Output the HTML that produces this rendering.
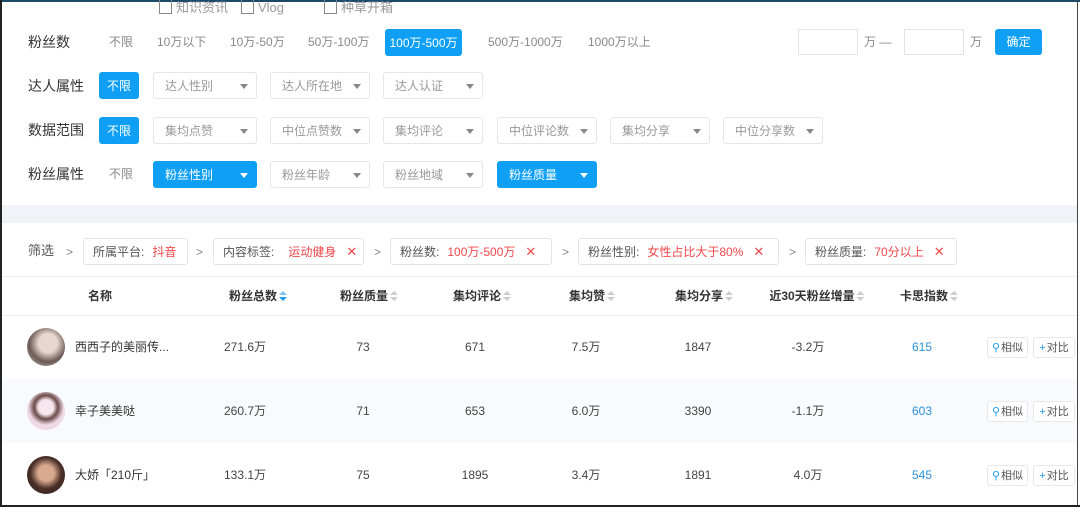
<!DOCTYPE html>
<html><head><meta charset="utf-8"><style>
*{margin:0;padding:0;box-sizing:border-box}
body{width:1080px;height:507px;position:relative;overflow:hidden;background:#fff;font-family:"Liberation Sans","Noto Sans CJK SC",sans-serif;color:#333;line-height:16px}
.a{position:absolute;white-space:nowrap;line-height:16px}
.lbl{font-size:14px;color:#333;line-height:18px}
.opt{font-size:12px;color:#888}
.btn{position:absolute;background:#0fa0f5;color:#fff;border-radius:3px;font-size:12px;display:flex;align-items:center;justify-content:center;line-height:16px}
.dd{position:absolute;border:1px solid #e6e6e6;border-radius:3px;font-size:12px;color:#999;padding-left:11px;display:flex;align-items:center;height:27px}
.dd:after{content:"";position:absolute;right:8px;top:11px;border-left:4px solid transparent;border-right:4px solid transparent;border-top:5px solid #888}
.dd.on{background:#0fa0f5;color:#fff;border-color:#0fa0f5}
.dd.on:after{border-top-color:#fff}
.cb{position:absolute;top:0;width:13px;height:14px;border:1px solid #888;border-top:none}
.bc{position:absolute;top:238px;height:27px;border:1px solid #e4e4e4;border-radius:3px;font-size:12px;color:#555;display:flex;align-items:center;padding-left:9px;line-height:16px}
.bc b{font-weight:normal;color:#f0484a;margin-left:8px}
.bc i{font-style:normal;color:#f0484a;margin-left:10px;font-size:13px}
.gt{position:absolute;top:244px;font-size:12px;color:#888;line-height:16px}
.th{position:absolute;top:288px;font-size:12px;font-weight:bold;color:#333;transform:translateX(-50%);display:flex;align-items:center;line-height:16px}
.srt{display:inline-block;margin-left:2px;width:8px;height:10px;position:relative}
.srt:before,.srt:after{content:"";position:absolute;left:0;border-left:4px solid transparent;border-right:4px solid transparent}
.srt:before{top:0;border-bottom:4px solid #ccc}
.srt:after{bottom:0;border-top:4px solid #ccc}
.srt.b:after{border-top-color:#1e9be8}.srt.b:before{border-bottom-color:#7cc4ef}
.td{position:absolute;font-size:12px;color:#444;transform:translateX(-50%);height:16px;display:flex;align-items:center}
.av{position:absolute;left:27px;width:38px;height:38px;border-radius:50%}
.nm{position:absolute;left:75px;font-size:12px;color:#333;height:16px;display:flex;align-items:center}
.sb{position:absolute;height:21px;border:1px solid #e8e8e8;border-radius:3px;font-size:11px;color:#555;display:flex;align-items:center;justify-content:center;background:#fff}
.sb span{color:#1e9be8;margin-right:1px}
</style></head><body>
<div class="a" style="left:0;top:0;width:1080px;height:2px;background:#1b4a6b"></div>
<div class="a" style="left:0;top:0;width:2px;height:507px;background:#222"></div>
<div class="a" style="right:2px;top:0;width:1px;height:507px;background:#444"></div>
<div class="a" style="left:0;bottom:0;width:1080px;height:2px;background:#222"></div>

<div class="cb" style="left:159px"></div><div class="a opt" style="left:176px;top:0;font-size:13px;color:#999">知识资讯</div>
<div class="cb" style="left:241px"></div><div class="a opt" style="left:258px;top:0;font-size:13px;color:#999">Vlog</div>
<div class="cb" style="left:324px"></div><div class="a opt" style="left:341px;top:0;font-size:13px;color:#999">种草开箱</div>

<div class="a lbl" style="left:28px;top:33px">粉丝数</div>
<div class="a opt" style="left:109px;top:34px">不限</div>
<div class="a opt" style="left:157px;top:34px">10万以下</div>
<div class="a opt" style="left:230px;top:34px">10万-50万</div>
<div class="a opt" style="left:308px;top:34px">50万-100万</div>
<div class="btn" style="left:385px;top:29px;width:77px;height:27px">100万-500万</div>
<div class="a opt" style="left:488px;top:34px">500万-1000万</div>
<div class="a opt" style="left:588px;top:34px">1000万以上</div>
<div class="a" style="left:798px;top:29px;width:60px;height:26px;border:1px solid #e3e3e3"></div>
<div class="a opt" style="left:864px;top:34px">万 —</div>
<div class="a" style="left:904px;top:29px;width:60px;height:26px;border:1px solid #e3e3e3"></div>
<div class="a opt" style="left:970px;top:34px">万</div>
<div class="btn" style="left:995px;top:29px;width:47px;height:26px">确定</div>

<div class="a lbl" style="left:28px;top:77px">达人属性</div>
<div class="btn" style="left:99px;top:72px;width:40px;height:27px">不限</div>
<div class="dd" style="left:153px;top:72px;width:104px">达人性别</div>
<div class="dd" style="left:270px;top:72px;width:100px">达人所在地</div>
<div class="dd" style="left:383px;top:72px;width:100px">达人认证</div>

<div class="a lbl" style="left:28px;top:121px">数据范围</div>
<div class="btn" style="left:99px;top:117px;width:40px;height:27px">不限</div>
<div class="dd" style="left:153px;top:117px;width:104px">集均点赞</div>
<div class="dd" style="left:270px;top:117px;width:100px">中位点赞数</div>
<div class="dd" style="left:383px;top:117px;width:100px">集均评论</div>
<div class="dd" style="left:497px;top:117px;width:100px">中位评论数</div>
<div class="dd" style="left:610px;top:117px;width:100px">集均分享</div>
<div class="dd" style="left:723px;top:117px;width:100px">中位分享数</div>

<div class="a lbl" style="left:28px;top:165px">粉丝属性</div>
<div class="a opt" style="left:109px;top:166px">不限</div>
<div class="dd on" style="left:153px;top:161px;width:104px">粉丝性别</div>
<div class="dd" style="left:270px;top:161px;width:100px">粉丝年龄</div>
<div class="dd" style="left:383px;top:161px;width:100px">粉丝地域</div>
<div class="dd on" style="left:497px;top:161px;width:100px">粉丝质量</div>

<div class="a" style="left:2px;top:205px;width:1075px;height:18px;background:#f0f3f8"></div>

<div class="a" style="left:28px;top:243px;font-size:13px;color:#555">筛选</div>
<div class="gt" style="left:66px">&gt;</div>
<div class="bc" style="left:83px;width:105px">所属平台:<b>抖音</b></div>
<div class="gt" style="left:196px">&gt;</div>
<div class="bc" style="left:213px;width:151px">内容标签:<b style="margin-left:14px">运动健身</b><i>✕</i></div>
<div class="gt" style="left:374px">&gt;</div>
<div class="bc" style="left:390px;width:162px">粉丝数:<b>100万-500万</b><i>✕</i></div>
<div class="gt" style="left:562px">&gt;</div>
<div class="bc" style="left:578px;width:201px">粉丝性别:<b>女性占比大于80%</b><i>✕</i></div>
<div class="gt" style="left:789px">&gt;</div>
<div class="bc" style="left:805px;width:152px">粉丝质量:<b>70分以上</b><i>✕</i></div>

<div class="a" style="left:2px;top:276px;width:1075px;height:1px;background:#f0f0f0"></div>
<div class="th" style="left:100px">名称</div>
<div class="th" style="left:258px">粉丝总数<span class="srt b"></span></div>
<div class="th" style="left:369px">粉丝质量<span class="srt"></span></div>
<div class="th" style="left:482px">集均评论<span class="srt"></span></div>
<div class="th" style="left:592px">集均赞<span class="srt"></span></div>
<div class="th" style="left:704px">集均分享<span class="srt"></span></div>
<div class="th" style="left:817px">近30天粉丝增量<span class="srt"></span></div>
<div class="th" style="left:929px">卡思指数<span class="srt"></span></div>
<div class="a" style="left:2px;top:315px;width:1075px;height:1px;background:#eee"></div>
<div class="a" style="left:2px;top:379px;width:1075px;height:64px;background:#f8fafd"></div>

<div class="av" style="top:328px;background:radial-gradient(circle at 55% 40%,#e8d6d0 0 30%,#6b5a55 60%,#cfc7c5)"></div>
<div class="nm" style="top:339px">西西子的美丽传...</div>
<div class="td" style="left:245px;top:339px">271.6万</div><div class="td" style="left:363px;top:339px">73</div><div class="td" style="left:475px;top:339px">671</div><div class="td" style="left:586px;top:339px">7.5万</div><div class="td" style="left:698px;top:339px">1847</div><div class="td" style="left:808px;top:339px">-3.2万</div><div class="td" style="left:922px;top:339px;color:#2b8fdc">615</div>
<div class="sb" style="left:987px;top:337px;width:41px"><span>⚲</span>相似</div><div class="sb" style="left:1033px;top:337px;width:42px"><span>+</span>对比</div>

<div class="av" style="top:392px;background:radial-gradient(circle at 50% 40%,#f6e6ee 0 25%,#6a4a48 40%,#f0dbe6 60%,#e6cfe0)"></div>
<div class="nm" style="top:403px">幸子美美哒</div>
<div class="td" style="left:245px;top:403px">260.7万</div><div class="td" style="left:363px;top:403px">71</div><div class="td" style="left:475px;top:403px">653</div><div class="td" style="left:586px;top:403px">6.0万</div><div class="td" style="left:698px;top:403px">3390</div><div class="td" style="left:808px;top:403px">-1.1万</div><div class="td" style="left:922px;top:403px;color:#2b8fdc">603</div>
<div class="sb" style="left:987px;top:401px;width:41px"><span>⚲</span>相似</div><div class="sb" style="left:1033px;top:401px;width:42px"><span>+</span>对比</div>

<div class="av" style="top:456px;background:radial-gradient(circle at 50% 45%,#d9a98f 0 28%,#4a3028 55%,#2a1d18)"></div>
<div class="nm" style="top:467px">大娇「210斤」</div>
<div class="td" style="left:245px;top:467px">133.1万</div><div class="td" style="left:363px;top:467px">75</div><div class="td" style="left:475px;top:467px">1895</div><div class="td" style="left:586px;top:467px">3.4万</div><div class="td" style="left:698px;top:467px">1891</div><div class="td" style="left:808px;top:467px">4.0万</div><div class="td" style="left:922px;top:467px;color:#2b8fdc">545</div>
<div class="sb" style="left:987px;top:465px;width:41px"><span>⚲</span>相似</div><div class="sb" style="left:1033px;top:465px;width:42px"><span>+</span>对比</div>
</body></html>
